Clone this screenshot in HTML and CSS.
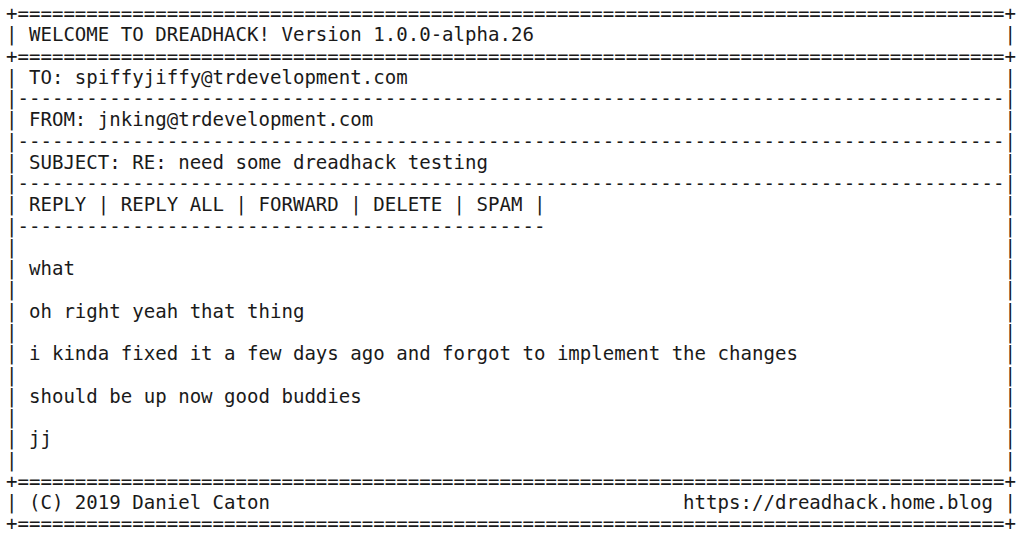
FILE: index.html
```html
<!DOCTYPE html>
<html>
<head>
<meta charset="utf-8">
<title>DREADHACK</title>
<link rel="stylesheet" href="styles.css">
</head>
<body>
<div class="screen">
  <div class="row">+======================================================================================+</div>
  <div class="row"><span>| WELCOME TO DREADHACK! Version 1.0.0-alpha.26</span><span>|</span></div>
  <div class="row">+======================================================================================+</div>
  <div class="row"><span>| TO: spiffyjiffy@trdevelopment.com</span><span>|</span></div>
  <div class="row">|--------------------------------------------------------------------------------------|</div>
  <div class="row"><span>| FROM: jnking@trdevelopment.com</span><span>|</span></div>
  <div class="row">|--------------------------------------------------------------------------------------|</div>
  <div class="row"><span>| SUBJECT: RE: need some dreadhack testing</span><span>|</span></div>
  <div class="row">|--------------------------------------------------------------------------------------|</div>
  <div class="row"><span>| REPLY | REPLY ALL | FORWARD | DELETE | SPAM |</span><span>|</span></div>
  <div class="row"><span>|----------------------------------------------</span><span>|</span></div>
  <div class="row"><span>|</span><span>|</span></div>
  <div class="row"><span>| what</span><span>|</span></div>
  <div class="row"><span>|</span><span>|</span></div>
  <div class="row"><span>| oh right yeah that thing</span><span>|</span></div>
  <div class="row"><span>|</span><span>|</span></div>
  <div class="row"><span>| i kinda fixed it a few days ago and forgot to implement the changes</span><span>|</span></div>
  <div class="row"><span>|</span><span>|</span></div>
  <div class="row"><span>| should be up now good buddies</span><span>|</span></div>
  <div class="row"><span>|</span><span>|</span></div>
  <div class="row"><span>| jj</span><span>|</span></div>
  <div class="row"><span>|</span><span>|</span></div>
  <div class="row">+======================================================================================+</div>
  <div class="row"><span>| (C) 2019 Daniel Caton</span><span>https://dreadhack.home.blog |</span></div>
  <div class="row">+======================================================================================+</div>
</div>
</body>
</html>
```
FILE: styles.css
```css
html, body {
  margin: 0;
  padding: 0;
  background: #ffffff;
}

.screen {
  padding: 3px 0 0 6px;
  font-family: "DejaVu Sans Mono", "Liberation Mono", monospace;
  font-size: 19.07px;
  line-height: 21.27px;
  color: #1a1a1a;
}

.row {
  display: flex;
  justify-content: space-between;
  width: 88ch;
  white-space: pre;
}
```
